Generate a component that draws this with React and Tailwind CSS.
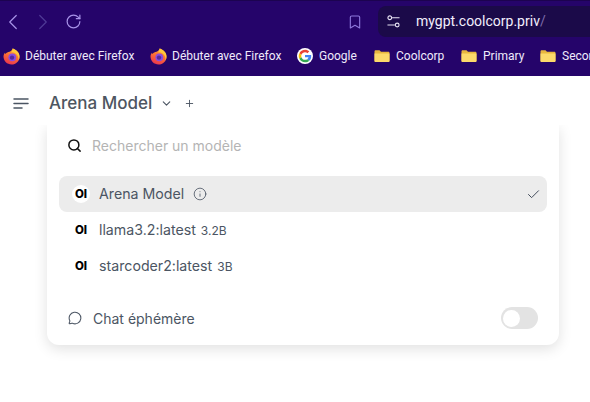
import React from "react";
import { ChevronLeft, ChevronRight, RotateCw, Bookmark, Search, Check, Info, Plus, ChevronDown, MessageCircle } from "lucide-react";

const FirefoxIcon = () => (
  <svg width="17" height="17" viewBox="0 0 17 17" className="shrink-0">
    <defs>
      <linearGradient id="ff" x1="0.7" y1="0" x2="0.3" y2="1">
        <stop offset="0" stopColor="#ffb22e" />
        <stop offset="0.5" stopColor="#fb6a36" />
        <stop offset="1" stopColor="#ea3350" />
      </linearGradient>
    </defs>
    <path d="M0.500 8.500C.6 6.800 1.200 5.500 2 4.700c.1.600.3 1 .6 1.300C3.400 4.600 5 4 6.500 3.800 8 3.400 9.200 2.200 9.700.6c3.500 1.200 6.800 3.800 6.800 8.100 0 4.400-3.600 7.800-8 7.800s-8-3.600-8-8z" fill="url(#ff)" />
    <circle cx="9.300" cy="9.300" r="3.900" fill="#8a4be0" />
    <circle cx="9" cy="9.600" r="2.200" fill="#54299f" />
    <path d="M9.700.6c3.500 1.200 6.800 3.800 6.800 8.100 0 1.400-.4 2.700-1 3.800.5-3-.5-5.600-3.200-7.300-1.300-.8-2.800-1-4.200-.8C9 3.500 9.600 2 9.700.6z" fill="#ffc93a" />
  </svg>
);

const GoogleIcon = () => (
  <svg width="16" height="16" viewBox="0 0 48 48" className="shrink-0">
    <circle cx="24" cy="24" r="24" fill="#fff" />
    <path fill="#ea4335" d="M24 12.500c3 0 5.500 1 7.500 2.900l5.400-5.400C33.500 6.900 29.200 5 24 5 16.600 5 10.200 9.200 7.100 15.400l6.300 4.900C14.900 15.700 19.100 12.500 24 12.500z" />
    <path fill="#4285f4" d="M42.600 24.400c0-1.300-.1-2.500-.3-3.700H24v7.200h10.500c-.5 2.400-1.800 4.400-3.900 5.800l6.100 4.700c3.600-3.300 5.900-8.200 5.900-14z" />
    <path fill="#fbbc05" d="M13.400 27.700c-.4-1.100-.6-2.400-.6-3.700s.2-2.500.6-3.700l-6.300-4.900C5.800 18 5 20.900 5 24s.8 6 2.100 8.600l6.300-4.900z" />
    <path fill="#34a853" d="M24 43c5.200 0 9.500-1.700 12.700-4.600l-6.100-4.700c-1.700 1.100-3.900 1.800-6.600 1.800-4.900 0-9.100-3.200-10.600-7.800l-6.300 4.900C10.200 38.800 16.600 43 24 43z" />
  </svg>
);

const FolderIcon = () => (
  <svg width="16" height="14" viewBox="0 0 16 14" className="shrink-0">
    <path d="M0.500 2.500C0.500 1.700 1 1.200 1.800 1.200h3.700l1.500 1.600h7.200c.8 0 1.300.5 1.300 1.300v7.600c0 .8-.5 1.300-1.300 1.300H1.800c-.8 0-1.300-.5-1.300-1.300z" fill="#e8b63f" />
    <path d="M0.500 4.600h15v7.100c0 .8-.5 1.300-1.300 1.300H1.800c-.8 0-1.300-.5-1.300-1.300z" fill="#fcd96b" />
  </svg>
);

const TuneIcon = () => (
  <svg width="13" height="13" viewBox="0 0 14 14" fill="none" stroke="#e8e4f4" strokeWidth="1.200" className="shrink-0">
    <circle cx="3" cy="3" r="2" />
    <path d="M5.500 3h8M0.500 10.800h8" />
    <circle cx="11" cy="10.800" r="2" />
  </svg>
);

const MenuIcon = () => (
  <svg width="16" height="11" viewBox="0 0 16 11" fill="none" stroke="#4b5563" strokeWidth="1.500" strokeLinecap="round">
    <path d="M1 1h14M1 5.500h14M1 10h8" />
  </svg>
);

const OI = ({ active }) => (
  <div className={`flex size-[18px] shrink-0 items-center justify-center rounded-full pt-[2px] text-[11.500px] font-extrabold leading-none text-black ${active ? "bg-white" : ""}`}>
    OI
  </div>
);

const bookmarks = [
  { icon: <FirefoxIcon />, label: "Débuter avec Firefox", w: "w-[147px]", gap: "gap-[5px]" },
  { icon: <FirefoxIcon />, label: "Débuter avec Firefox", w: "w-[147px]", gap: "gap-[5px]" },
  { icon: <GoogleIcon />, label: "Google", w: "w-[77px]", gap: "gap-[6px]" },
  { icon: <FolderIcon />, label: "Coolcorp", w: "w-[87px]", gap: "gap-[6px]" },
  { icon: <FolderIcon />, label: "Primary", w: "w-[79px]", gap: "gap-[6px]" },
  { icon: <FolderIcon />, label: "Secondary", w: "w-[90px]", gap: "gap-[6px]" },
];

export default function App() {
  return (
    <div className="h-[402px] w-[590px] overflow-hidden bg-white font-['Inter',sans-serif]">
      {/* browser bar */}
      <div className="h-[76px] border-t border-[#1c0350] bg-[#25046a]">
        <div className="flex h-[41px] items-center">
          <ChevronLeft size={26} strokeWidth={1.100} className="text-[#a893e8]" />
          <ChevronRight size={26} strokeWidth={1.100} className="ml-[4px] text-[#4f3a96]" />
          <RotateCw size={17} strokeWidth={1.700} className="ml-[9px] text-[#a893e8]" />
          <Bookmark size={16} strokeWidth={1.700} className="ml-[265px] text-[#8e78dc]" />
          <div className="ml-[15px] flex h-[31px] flex-1 items-center rounded-l-lg bg-[#1b0a49] pl-[9px] font-['Roboto',sans-serif] text-[14px] text-[#f2eefc]">
            <TuneIcon />
            <span className="ml-[16px]">mygpt.coolcorp.priv<span className="text-[#7d6cab]">/</span></span>
          </div>
        </div>
        <div className="flex h-[28px] items-center overflow-hidden pl-[3px] font-['Roboto',sans-serif] text-[12px] text-[#efeafb]">
          {bookmarks.map((b, i) => (
            <div key={i} className={`flex shrink-0 items-center whitespace-nowrap ${b.gap} ${b.w}`}>
              {b.icon}
              <span>{b.label}</span>
            </div>
          ))}
        </div>
      </div>

      {/* app header, sits over the top of the dropdown */}
      <div className="relative z-10 flex h-[49px] items-center bg-white pl-[13px] pt-[6px] text-[#4b5563]">
        <MenuIcon />
        <span className="ml-[20px] text-[17px] font-medium text-[#4e5661]">Arena Model</span>
        <ChevronDown size={13} strokeWidth={2} className="ml-[8px]" />
        <Plus size={11} strokeWidth={2} className="ml-[11px]" />
      </div>

      {/* model dropdown */}
      <div className="ml-[47px] h-[220px] w-[512px] rounded-b-xl bg-white px-[12px] shadow-[0_4px_14px_rgba(0,0,0,0.12)]">
        <div className="flex h-[40px] items-center pl-[8px] text-[14px] text-[#b4b4b4]">
          <Search size={15} strokeWidth={2.400} className="text-[#111]" />
          <span className="ml-[10px]">Rechercher un modèle</span>
        </div>
        <div className="mt-[11px] flex h-[36px] items-center rounded-lg bg-[#ececec] pl-[13px] pr-[6px] text-[14.200px] text-[#4b5563]">
          <OI active />
          <span className="ml-[9px]">Arena Model</span>
          <Info size={14} strokeWidth={1.400} className="ml-[9px]" />
          <Check size={15} strokeWidth={1.500} className="ml-auto text-[#374151]" />
        </div>
        <div className="flex h-[36px] items-center pl-[13px] text-[14.200px] text-[#4b5563]">
          <OI />
          <div className="ml-[9px] flex items-baseline">
            <span>llama3.2:latest</span>
            <span className="ml-[5px] text-[12px]">3.2B</span>
          </div>
        </div>
        <div className="flex h-[36px] items-center pl-[13px] text-[14.200px] text-[#4b5563]">
          <OI />
          <div className="ml-[9px] flex items-baseline">
            <span>starcoder2:latest</span>
            <span className="ml-[5px] text-[12px]">3B</span>
          </div>
        </div>
        <div className="mt-[16px] flex h-[36px] items-center pl-[9px] pr-[9px] text-[14px] text-[#4b5563]">
          <MessageCircle size={14} strokeWidth={1.800} />
          <span className="ml-[11px]">Chat éphémère</span>
          <div className="ml-auto flex h-[22px] w-[37px] items-center rounded-full bg-[#e3e3e3] pl-[2px]">
            <div className="size-[17px] rounded-full bg-white" />
          </div>
        </div>
      </div>
    </div>
  );
}
